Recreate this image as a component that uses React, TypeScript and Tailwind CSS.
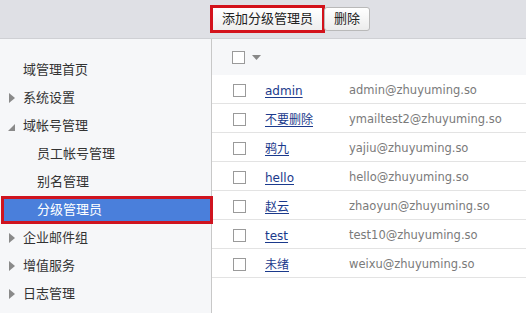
const menu = [
  { label: "域管理首页", level: 0, arrow: "none" },
  { label: "系统设置", level: 0, arrow: "right" },
  { label: "域帐号管理", level: 0, arrow: "down" },
  { label: "员工帐号管理", level: 1, arrow: "none" },
  { label: "别名管理", level: 1, arrow: "none" },
  { label: "分级管理员", level: 1, arrow: "none", active: true },
  { label: "企业邮件组", level: 0, arrow: "right" },
  { label: "增值服务", level: 0, arrow: "right" },
  { label: "日志管理", level: 0, arrow: "right" },
];

const rows = [
  { name: "admin", email: "admin@zhuyuming.so" },
  { name: "不要删除", email: "ymailtest2@zhuyuming.so" },
  { name: "鸦九", email: "yajiu@zhuyuming.so" },
  { name: "hello", email: "hello@zhuyuming.so" },
  { name: "赵云", email: "zhaoyun@zhuyuming.so" },
  { name: "test", email: "test10@zhuyuming.so" },
  { name: "未绪", email: "weixu@zhuyuming.so" },
];

function Arrow({ kind }: { kind: string }) {
  if (kind === "right") {
    return (
      <svg width="6" height="10" viewBox="0 0 6 10" className="absolute left-[9px] top-[9px]">
        <path d="M0 0 L6 5 L0 10 Z" fill="#8a8a8a" />
      </svg>
    );
  }
  if (kind === "down") {
    return (
      <svg width="7" height="7" viewBox="0 0 7 7" className="absolute left-[8px] top-[12px]">
        <path d="M7 0 L7 7 L0 7 Z" fill="#8a8a8a" />
      </svg>
    );
  }
  return null;
}

export default function App() {
  return (
    <div
      className="flex h-[313px] w-[526px] flex-col overflow-hidden bg-white text-[13px] text-[#333]"
      style={{ fontFamily: '"DejaVu Sans", "Noto Sans CJK SC", sans-serif' }}
    >
      {/* Toolbar */}
      <div className="flex h-[39px] shrink-0 items-center border-b border-[#cfd0d4] bg-[#dfe0e5] pl-[210px]">
        <div className="border-[3px] border-[#d3121b]">
          <button className="h-[22px] bg-gradient-to-b from-white to-[#eeeeee] px-[9px] leading-[22px] text-[#222]">
            添加分级管理员
          </button>
        </div>
        <button className="ml-[-1px] h-[24px] rounded-[3px] border border-[#b9b9b9] bg-gradient-to-b from-white to-[#ececec] px-[9px] text-[#222]">
          删除
        </button>
      </div>

      <div className="flex min-h-0 flex-1">
        {/* Sidebar */}
        <div className="relative z-10 w-[212px] shrink-0 border-r border-[#c8c8c8] bg-[#f6f7f9] pt-[17px]">
          {menu.map((m) =>
            m.active ? (
              <div
                key={m.label}
                className="ml-[1px] flex h-[28px] w-[212px] items-center border-[3px] border-[#cf1420] bg-[#4a7fdb] pl-[33px] text-white"
              >
                {m.label}
              </div>
            ) : (
              <div
                key={m.label}
                className={`relative flex h-[28px] items-center ${m.level === 1 ? "pl-[37px]" : "pl-[23px]"}`}
              >
                <Arrow kind={m.arrow} />
                {m.label}
              </div>
            )
          )}
        </div>

        {/* Table */}
        <div className="flex-1 bg-white">
          <div className="flex h-[36px] items-center bg-[#f6f7f9] pl-[20px]">
            <span className="h-[13px] w-[13px] border border-[#9a9a9a] bg-white" />
            <svg width="9" height="5" viewBox="0 0 9 5" className="ml-[7px]">
              <path d="M0 0 L9 0 L4.5 5 Z" fill="#888" />
            </svg>
          </div>
          {rows.map((r) => (
            <div key={r.email} className="flex h-[29px] items-center border-b border-[#e3e3e3] pl-[21px] pt-[3px] text-[12px]">
              <span className="h-[13px] w-[13px] shrink-0 border border-[#9a9a9a] bg-white" />
              <a className="ml-[19px] w-[84px] text-[#1b3a8c] underline underline-offset-2">{r.name}</a>
              <span className="text-[11.5px] text-[#7a7a7a]">{r.email}</span>
            </div>
          ))}
        </div>
      </div>
    </div>
  );
}
